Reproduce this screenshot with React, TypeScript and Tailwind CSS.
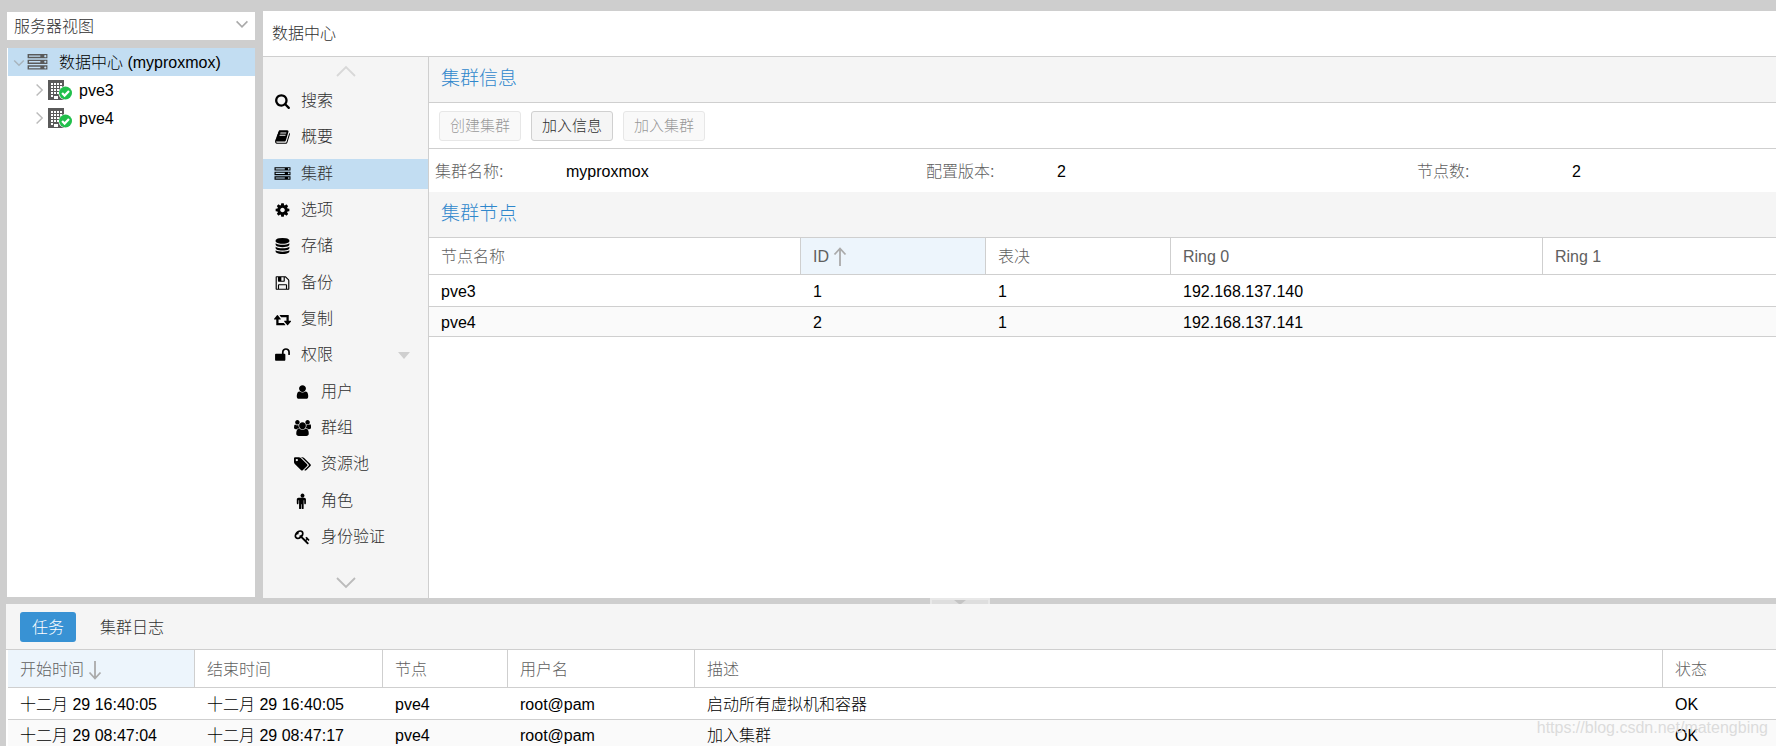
import { useState } from "react";
import type { ReactNode } from "react";
import clsx from "clsx";

interface IconProps {
  d: string;
  viewBox?: string;
  className?: string;
}

function Icon({ d, viewBox = "0 0 1792 1792", className }: IconProps) {
  return (
    <svg viewBox={viewBox} className={className} fill="currentColor" aria-hidden="true">
      <path d={d} />
    </svg>
  );
}

const WIDE = "-64 0 1920 1792";

const icons = {
  search:
    "M1216 832q0-185-131.5-316.5t-316.5-131.5-316.5 131.5-131.5 316.5 131.5 316.5 316.5 131.5 316.5-131.5 131.5-316.5zm512 832q0 52-38 90t-90 38q-54 0-90-38l-343-342q-179 124-399 124-143 0-273.5-55.5t-225-150-150-225-55.5-273.5 55.5-273.5 150-225 225-150 273.5-55.5 273.5 55.5 225 150 150 225 55.5 273.5q0 220-124 399l343 343q37 37 37 90z",
  book: "M1703 478q40 57 18 129l-275 906q-19 64-76.5 107.5t-122.5 43.5h-923q-77 0-148.5-53.5t-99.5-131.5q-24-67-2-127 0-4 3-27t4-37q1-8-3-21.5t-3-19.5q2-11 8-21t16.5-23.5 16.5-23.5q23-38 45-91.5t30-91.5q3-10 .5-30t-.5-28q3-11 17-28t17-23q21-36 42-92t25-90q1-9-2.5-32t.5-28q4-13 22-30.5t22-22.5q19-26 42.5-84.5t27.5-96.5q1-8-3-25.5t-2-26.5q2-8 9-18t18-23 17-21q8-12 16.5-30.5t15-35 16-36 19.5-32 26.5-23.5 36-11.5 47.5 5.5l-1 3q38-9 51-9h761q74 0 114 56t18 130l-274 906q-36 119-71.5 153.5t-128.5 34.5h-869q-27 0-38 15-11 16-1 43 24 70 144 70h923q29 0 56-15.5t35-41.5l300-987q7-22 5-57 38 15 59 43zm-1064 2q-4 13 2 22.5t20 9.5h608q13 0 25.5-9.5t16.5-22.5l21-64q4-13-2-22.5t-20-9.5h-608q-13 0-25.5 9.5t-16.5 22.5zm-83 256q-4 13 2 22.5t20 9.5h608q13 0 25.5-9.5t16.5-22.5l21-64q4-13-2-22.5t-20-9.5h-608q-13 0-25.5 9.5t-16.5 22.5z",
  server:
    "M128 1408h1024v-128h-1024v128zm0-512h1024v-128h-1024v128zm1568 448q0-40-28-68t-68-28-68 28-28 68 28 68 68 28 68-28 28-68zm-1568-960h1024v-128h-1024v128zm1568 448q0-40-28-68t-68-28-68 28-28 68 28 68 68 28 68-28 28-68zm0-512q0-40-28-68t-68-28-68 28-28 68 28 68 68 28 68-28 28-68zm96 832v384h-1792v-384h1792zm0-512v384h-1792v-384h1792zm0-512v384h-1792v-384h1792z",
  cog: "M1152 896q0-106-75-181t-181-75-181 75-75 181 75 181 181 75 181-75 75-181zm512-109v222q0 12-8 23t-20 13l-185 28q-19 54-39 91 35 50 107 138 10 12 10 25t-9 23q-27 37-99 108t-94 71q-12 0-26-9l-138-108q-44 23-91 38-16 136-29 186-7 28-36 28h-222q-14 0-24.5-8.5t-11.5-21.5l-28-184q-49-16-90-37l-141 107q-10 9-25 9-14 0-25-11-126-114-165-168-7-10-7-23 0-12 8-23 15-21 51-66.5t54-70.5q-27-50-41-99l-183-27q-13-2-21-12.5t-8-23.5v-222q0-12 8-23t19-13l186-28q14-46 39-92-40-57-107-138-10-12-10-24 0-10 9-23 26-36 98.5-107.5t94.5-71.5q13 0 26 10l138 107q44-23 91-38 16-136 29-186 7-28 36-28h222q14 0 24.5 8.5t11.5 21.5l28 184q49 16 90 37l142-107q9-9 24-9 13 0 25 10 129 119 165 170 7 8 7 22 0 12-8 23-15 21-51 66.5t-54 70.5q26 50 41 98l183 28q13 2 21 12.5t8 23.5z",
  database:
    "M896 768q237 0 443-43t325-127v170q0 69-103 128t-280 93.5-385 34.5-385-34.5-280-93.5-103-128v-170q119 84 325 127t443 43zm0 768q237 0 443-43t325-127v170q0 69-103 128t-280 93.5-385 34.5-385-34.5-280-93.5-103-128v-170q119 84 325 127t443 43zm0-384q237 0 443-43t325-127v170q0 69-103 128t-280 93.5-385 34.5-385-34.5-280-93.5-103-128v-170q119 84 325 127t443 43zm0-1152q208 0 385 34.5t280 93.5 103 128v128q0 69-103 128t-280 93.5-385 34.5-385-34.5-280-93.5-103-128v-128q0-69 103-128t280-93.5 385-34.5z",
  floppy:
    "M512 1536h768v-384h-768v384zm896 0h128v-896q0-14-10-38.5t-20-34.5l-281-281q-10-10-34-20t-39-10v416q0 40-28 68t-68 28h-576q-40 0-68-28t-28-68v-416h-128v1280h128v-416q0-40 28-68t68-28h832q40 0 68 28t28 68v416zm-384-928v-320q0-13-9.5-22.5t-22.5-9.5h-192q-13 0-22.5 9.5t-9.5 22.5v320q0 13 9.5 22.5t22.5 9.5h192q13 0 22.5-9.5t9.5-22.5zm640 32v928q0 40-28 68t-68 28h-1344q-40 0-68-28t-28-68v-1344q0-40 28-68t68-28h928q40 0 88 20t76 48l280 280q28 28 48 76t20 88z",
  retweet:
    "M1216 1568q0 13-9.5 22.5t-22.5 9.5h-960q-8 0-13.5-2t-9-7-5.5-8-3-11.5-1-11.5v-600h-192q-26 0-45-19t-19-45q0-24 15-41l320-384q19-22 49-22t49 22l320 384q15 17 15 41 0 26-19 45t-45 19h-192v384h576q16 0 25 11l160 192q7 10 7 21zm640-416q0 24-15 41l-320 384q-20 23-49 23t-49-23l-320-384q-15-17-15-41 0-26 19-45t45-19h192v-384h-576q-16 0-25-12l-160-192q-7-9-7-20 0-13 9.5-22.5t22.5-9.5h960q8 0 13.5 2t9 7 5.5 8 3 11.5 1 11.5v600h192q26 0 45 19t19 45z",
  unlock:
    "M1728 576v256q0 26-19 45t-45 19h-64q-26 0-45-19t-19-45v-256q0-106-75-181t-181-75-181 75-75 181v192h96q40 0 68 28t28 68v576q0 40-28 68t-68 28h-960q-40 0-68-28t-28-68v-576q0-40 28-68t68-28h672v-192q0-185 131.5-316.5t316.5-131.5 316.5 131.5 131.5 316.5z",
  user: "M1536 1399q0 109-62.5 187t-150.5 78h-854q-88 0-150.5-78t-62.5-187q0-85 8.5-160.5t31.5-152 58.5-131 94-89 134.5-34.5q131 128 313 128t313-128q76 0 134.5 34.5t94 89 58.5 131 31.5 152 8.5 160.5zm-256-887q0 159-112.5 271.5t-271.5 112.5-271.5-112.5-112.5-271.5 112.5-271.5 271.5-112.5 271.5 112.5 112.5 271.5z",
  users:
    "M529 896q-162 5-265 128h-134q-82 0-138-40.5t-56-118.5q0-353 124-353 6 0 43.5 21t97.5 42.5 119 21.5q67 0 133-23-5 37-5 66 0 159 93 295zm1071 637q0 120-73 189.5t-194 69.5h-874q-121 0-194-69.5t-73-189.5q0-53 3.5-103.5t14-109 26.5-108.5 43-97.5 62-81 85.5-53.5 111.5-20q10 0 43 21.5t73 48 107 48 135 21.5 135-21.5 107-48 73-48 43-21.5q61 0 111.5 20t85.5 53.5 62 81 43 97.5 26.5 108.5 14 109 3.5 103.5zm-1024-1277q0 106-75 181t-181 75-181-75-75-181 75-181 181-75 181 75 75 181zm704 384q0 159-112.5 271.5t-271.5 112.5-271.5-112.5-112.5-271.5 112.5-271.5 271.5-112.5 271.5 112.5 112.5 271.5zm576 225q0 78-56 118.5t-138 40.5h-134q-103-123-265-128 93-136 93-295 0-29-5-66 66 23 133 23 59 0 119-21.5t97.5-42.5 43.5-21q124 0 124 353zm-128-609q0 106-75 181t-181 75-181-75-75-181 75-181 181-75 181 75 75 181z",
  tags: "M384 448q0-53-37.5-90.5t-90.5-37.5-90.5 37.5-37.5 90.5 37.5 90.5 90.5 37.5 90.5-37.5 37.5-90.5zm1067 576q0 53-37 90l-491 492q-39 37-91 37-53 0-90-37l-715-716q-38-37-64.5-101t-26.5-117v-416q0-52 38-90t90-38h416q53 0 117 26.5t102 64.5l715 714q37 39 37 91zm384 0q0 53-37 90l-491 492q-39 37-91 37-36 0-59-14t-53-45l470-470q37-37 37-90 0-52-37-91l-715-714q-38-38-102-64.5t-117-26.5h224q53 0 117 26.5t102 64.5l715 714q37 39 37 91z",
  male: "M1280 736v416q0 40-28 68t-68 28-68-28-28-68v-352h-64v912q0 46-33 79t-79 33-79-33-33-79v-464h-64v464q0 46-33 79t-79 33-79-33-33-79v-912h-64v352q0 40-28 68t-68 28-68-28-28-68v-416q0-80 56-136t136-56h640q80 0 136 56t56 136zm-160-448q0 93-65.5 158.5t-158.5 65.5-158.5-65.5-65.5-158.5 65.5-158.5 158.5-65.5 158.5 65.5 65.5 158.5z",
  key: "M832 512q0-80-56-136t-136-56-136 56-56 136q0 42 19 83-41-19-83-19-80 0-136 56t-56 136 56 136 136 56 136-56 56-136q0-42-19-83 41 19 83 19 80 0 136-56t56-136zm851 704q0 17-49 66t-66 49q-9 0-28.5-16t-36.5-33-38.5-40-24.5-26l-96 96 220 220q28 28 28 68 0 42-39 81t-81 39q-40 0-68-28l-671-671q-176 131-365 131-163 0-265.5-102.5t-102.5-265.5q0-160 95-313t248-248 313-95q163 0 265.5 102.5t102.5 265.5q0 189-131 365l355 355 96-96q-3-3-26-24.5t-40-38.5-33-36.5-16-28.5q0-17 49-66t66-49q13 0 23 10 6 6 46 44.5t82 79.5 86.5 86 73 78 28.5 41z",
};

interface NavEntry {
  label: string;
  icon: string;
  viewBox?: string;
  child?: boolean;
  expandable?: boolean;
}

const navEntries: NavEntry[] = [
  { label: "搜索", icon: icons.search },
  { label: "概要", icon: icons.book },
  { label: "集群", icon: icons.server },
  { label: "选项", icon: icons.cog },
  { label: "存储", icon: icons.database },
  { label: "备份", icon: icons.floppy },
  { label: "复制", icon: icons.retweet, viewBox: WIDE },
  { label: "权限", icon: icons.unlock, expandable: true },
  { label: "用户", icon: icons.user, child: true },
  { label: "群组", icon: icons.users, viewBox: WIDE, child: true },
  { label: "资源池", icon: icons.tags, viewBox: WIDE, child: true },
  { label: "角色", icon: icons.male, child: true },
  { label: "身份验证", icon: icons.key, child: true },
];

const nodes = [
  { name: "pve3", id: 1, votes: 1, ring0: "192.168.137.140", ring1: "" },
  { name: "pve4", id: 2, votes: 1, ring0: "192.168.137.141", ring1: "" },
];

const tasks = [
  {
    start: "十二月 29 16:40:05",
    end: "十二月 29 16:40:05",
    node: "pve4",
    user: "root@pam",
    desc: "启动所有虚拟机和容器",
    status: "OK",
  },
  {
    start: "十二月 29 08:47:04",
    end: "十二月 29 08:47:17",
    node: "pve4",
    user: "root@pam",
    desc: "加入集群",
    status: "OK",
  },
];

// shared by both grids
const headCell = "border-r border-[#cfcfcf] pt-0.5 pl-3 text-left font-light last:border-r-0";
const bodyRow =
  "h-[30px] first:h-8 *:border-b *:border-[#cfcfcf] *:pt-[3px] *:pl-3 *:leading-6 even:bg-[#fafafa]";

function Chevron({ d, className }: { d: string; className: string }) {
  return (
    <svg
      viewBox="0 0 20 20"
      className={className}
      fill="none"
      stroke="currentColor"
      strokeWidth="1.8"
      aria-hidden="true"
    >
      <path d={d} />
    </svg>
  );
}

function NodeIcon() {
  return (
    <svg viewBox="0 0 26 22" className="h-[22px] w-[26px]" aria-hidden="true">
      <path fill="#5a5a5a" d="M0 1h16v20H0z" />
      <path
        stroke="#fff"
        strokeWidth="2"
        fill="none"
        strokeDasharray="2 1"
        d="M3 5h11M3 8h11M3 11h11M3 14h11"
      />
      <path fill="#fff" d="M3 16h2v2H3zM6 17h4v3H6z" />
      <circle cx="17.500" cy="14" r="7" fill="#fff" />
      <circle cx="17.500" cy="14" r="6.500" fill="#21bf4b" />
      <path d="M14.100 14l2.500 2.600 4.400-4.700" stroke="#fff" strokeWidth="2.2" fill="none" />
    </svg>
  );
}

function SortArrow({ down }: { down?: boolean }) {
  return (
    <svg
      viewBox="0 0 14 20"
      className="h-5 w-3.5 text-[#aaa]"
      fill="none"
      stroke="currentColor"
      strokeWidth="1.8"
      aria-hidden="true"
    >
      <path d={down ? "M7 1v17M1.5 12.500l5.500 6 5.500-6" : "M7 19V2M1.500 7.500l5.500-6 5.500 6"} />
    </svg>
  );
}

function ResourceTree() {
  return (
    <aside className="flex w-[248px] shrink-0 flex-col gap-2">
      <div className="relative h-7 bg-white">
        <select
          aria-label="视图"
          className="h-7 w-full appearance-none bg-transparent pt-px pl-[7px] leading-7 text-[#303030] outline-none"
        >
          <option>服务器视图</option>
        </select>
        <Chevron d="M4 6l6 6 6-6" className="pointer-events-none absolute top-1 right-1 size-[18px] text-[#aaa]" />
      </div>
      <ul className="mb-px min-h-0 flex-1 border-l border-white bg-white text-black">
        <li className="flex h-7 items-center bg-[#c2ddf2] pl-[3px]">
          <Chevron d="M4 8l6 6 6-6" className="size-4 text-[#a8b4bd]" />
          <Icon d={icons.server} viewBox="0 128 1792 1536" className="mr-[11px] h-[17px] w-[21px] text-[#5a5a5a]" />
          <span className="pt-0.5">数据中心 (myproxmox)</span>
        </li>
        {["pve3", "pve4"].map((name) => (
          <li key={name} className="flex h-7 items-center pl-[23px]">
            <Chevron d="M7 3l7 7-7 7" className="mr-px size-4 text-[#bbb]" />
            <NodeIcon />
            <span className="pt-0.5 pl-[5px]">{name}</span>
          </li>
        ))}
      </ul>
    </aside>
  );
}

function SideNav() {
  const [active, setActive] = useState("集群");

  return (
    <nav className="flex w-[166px] shrink-0 flex-col border-r border-[#cfcfcf] bg-[#f5f5f5]">
      <button aria-label="向上滚动" className="flex h-[29px] shrink-0 justify-center pt-[5px] text-[#d8d8d8]">
        <Chevron d="M1 14l9-9 9 9" className="size-5" />
      </button>
      <ul className="flex min-h-0 flex-1 flex-col justify-between">
        {navEntries.map((entry) => (
          <li key={entry.label}>
            <button
              onClick={() => setActive(entry.label)}
              className={clsx(
                "flex h-[30px] w-full items-center gap-2.5 text-left leading-[30px] text-[#303030]",
                entry.child ? "pl-[31px]" : "pl-[11px]",
                active === entry.label && "bg-[#c2ddf2]"
              )}
            >
              <Icon d={entry.icon} viewBox={entry.viewBox} className="h-4 w-[17px] text-black" />
              <span className="flex-1">{entry.label}</span>
              {entry.expandable && (
                <svg viewBox="0 0 12 7" className="mr-[18px] h-[7px] w-3" aria-hidden="true">
                  <path fill="#cfcfcf" d="M0 0h12L6 7z" />
                </svg>
              )}
            </button>
          </li>
        ))}
      </ul>
      <button aria-label="向下滚动" className="flex h-[46px] shrink-0 items-end justify-center pb-1.5 text-[#bbb]">
        <Chevron d="M1 6l9 9 9-9" className="size-5" />
      </button>
    </nav>
  );
}

function PanelTitle({ children }: { children: ReactNode }) {
  return (
    <h2 className="h-[46px] border-b border-[#cfcfcf] bg-[#f5f5f5] pl-3 text-[19px] leading-[44px] text-[#2f87cc]">
      {children}
    </h2>
  );
}

function ToolButton({ children, disabled }: { children: ReactNode; disabled?: boolean }) {
  return (
    <button
      disabled={disabled}
      className="h-[30px] rounded-[3px] border border-[#d0d0d0] bg-[#f5f5f5] px-2.5 text-[15px] leading-7 text-[#303030] disabled:opacity-50"
    >
      {children}
    </button>
  );
}

function Field({ label, value, labelClass }: { label: string; value: string; labelClass: string }) {
  return (
    <div className="flex items-center pt-0.5">
      <dt className={clsx("text-[#606060]", labelClass)}>{label}:</dt>
      <dd className="text-black">{value}</dd>
    </div>
  );
}

function ClusterPanel() {
  return (
    <section className="min-w-0 flex-1 bg-white">
      <PanelTitle>集群信息</PanelTitle>
      <div className="flex h-[46px] items-center gap-2.5 border-b border-[#cfcfcf] pl-2.5">
        <ToolButton disabled>创建集群</ToolButton>
        <ToolButton>加入信息</ToolButton>
        <ToolButton disabled>加入集群</ToolButton>
      </div>
      <dl className="grid h-[43px] grid-cols-[491fr_491fr_359fr] pl-1.5">
        <Field label="集群名称" value="myproxmox" labelClass="w-[131px]" />
        <Field label="配置版本" value="2" labelClass="w-[131px]" />
        <Field label="节点数" value="2" labelClass="w-[155px]" />
      </dl>
      <PanelTitle>集群节点</PanelTitle>
      <table className="w-full table-fixed border-separate border-spacing-0">
        <colgroup>
          <col className="w-[372px]" />
          <col className="w-[185px]" />
          <col className="w-[185px]" />
          <col className="w-[372px]" />
          <col />
        </colgroup>
        <thead className="text-[#606060]">
          <tr className="h-[37px] *:border-b">
            <th className={headCell}>节点名称</th>
            <th className={clsx(headCell, "bg-[#edf5fc]")}>
              <span className="flex items-center gap-1">
                ID
                <SortArrow />
              </span>
            </th>
            <th className={headCell}>表决</th>
            <th className={headCell}>Ring 0</th>
            <th className={headCell}>Ring 1</th>
          </tr>
        </thead>
        <tbody className="text-black">
          {nodes.map((n) => (
            <tr key={n.name} className={bodyRow}>
              <td>{n.name}</td>
              <td>{n.id}</td>
              <td>{n.votes}</td>
              <td>{n.ring0}</td>
              <td>{n.ring1}</td>
            </tr>
          ))}
        </tbody>
      </table>
    </section>
  );
}

function TaskLog() {
  const [tab, setTab] = useState("任务");

  return (
    <section className="ml-1.5 h-[142px] shrink-0 overflow-hidden bg-white">
      <div role="tablist" className="flex h-[46px] items-center gap-3 border-b border-[#cfcfcf] bg-[#f5f5f5] pl-3.5">
        {["任务", "集群日志"].map((name) => (
          <button
            key={name}
            role="tab"
            aria-selected={tab === name}
            onClick={() => setTab(name)}
            className={clsx(
              "h-[30px] rounded-[3px] px-3 pt-px leading-[30px]",
              tab === name ? "bg-[#3892d4] text-white" : "text-[#303030]"
            )}
          >
            {name}
          </button>
        ))}
      </div>
      <table className="w-full table-fixed border-separate border-spacing-0 border-l-2 border-white">
        <colgroup>
          <col className="w-[187px]" />
          <col className="w-[188px]" />
          <col className="w-[125px]" />
          <col className="w-[187px]" />
          <col />
          <col className="w-[113px]" />
        </colgroup>
        <thead className="text-[#606060]">
          <tr className="h-[38px] *:border-b">
            <th className={clsx(headCell, "bg-[#edf5fc]")}>
              <span className="flex items-center gap-1">
                开始时间
                <SortArrow down />
              </span>
            </th>
            <th className={headCell}>结束时间</th>
            <th className={headCell}>节点</th>
            <th className={headCell}>用户名</th>
            <th className={headCell}>描述</th>
            <th className={headCell}>状态</th>
          </tr>
        </thead>
        <tbody className="text-black">
          {tasks.map((t) => (
            <tr key={t.start} className={bodyRow}>
              <td>{t.start}</td>
              <td>{t.end}</td>
              <td>{t.node}</td>
              <td>{t.user}</td>
              <td>{t.desc}</td>
              <td>{t.status}</td>
            </tr>
          ))}
        </tbody>
      </table>
    </section>
  );
}

export default function App() {
  return (
    <div className="relative flex h-screen flex-col overflow-hidden bg-[#cecece] font-['Liberation_Sans','Noto_Sans_CJK_SC',sans-serif] text-base font-light">
      <div className="flex min-h-0 flex-1 gap-2 pl-[7px]">
        <div className="flex pt-3">
          <ResourceTree />
        </div>
        <main className="flex min-w-0 flex-1 flex-col pt-[11px]">
          <h1 className="h-[46px] shrink-0 border-b border-[#cfcfcf] bg-white pl-[9px] leading-[46px] text-[#303030]">
            数据中心
          </h1>
          <div className="flex min-h-0 flex-1">
            <SideNav />
            <ClusterPanel />
          </div>
        </main>
      </div>
      <div className="flex h-1.5 shrink-0 justify-center pl-36">
        <button aria-label="折叠" className="flex w-[60px] justify-center border-2 border-b-0 border-[#e8e8e8] bg-[#dedede]">
          <svg viewBox="0 0 12 4" className="h-1 w-3" aria-hidden="true">
            <path fill="#c4c4c4" d="M0 0h12L7 4H5z" />
          </svg>
        </button>
      </div>
      <TaskLog />
      <span className="pointer-events-none absolute right-2 bottom-1.5 text-[#dcdcdc]">
        https://blog.csdn.net/matengbing
      </span>
    </div>
  );
}
